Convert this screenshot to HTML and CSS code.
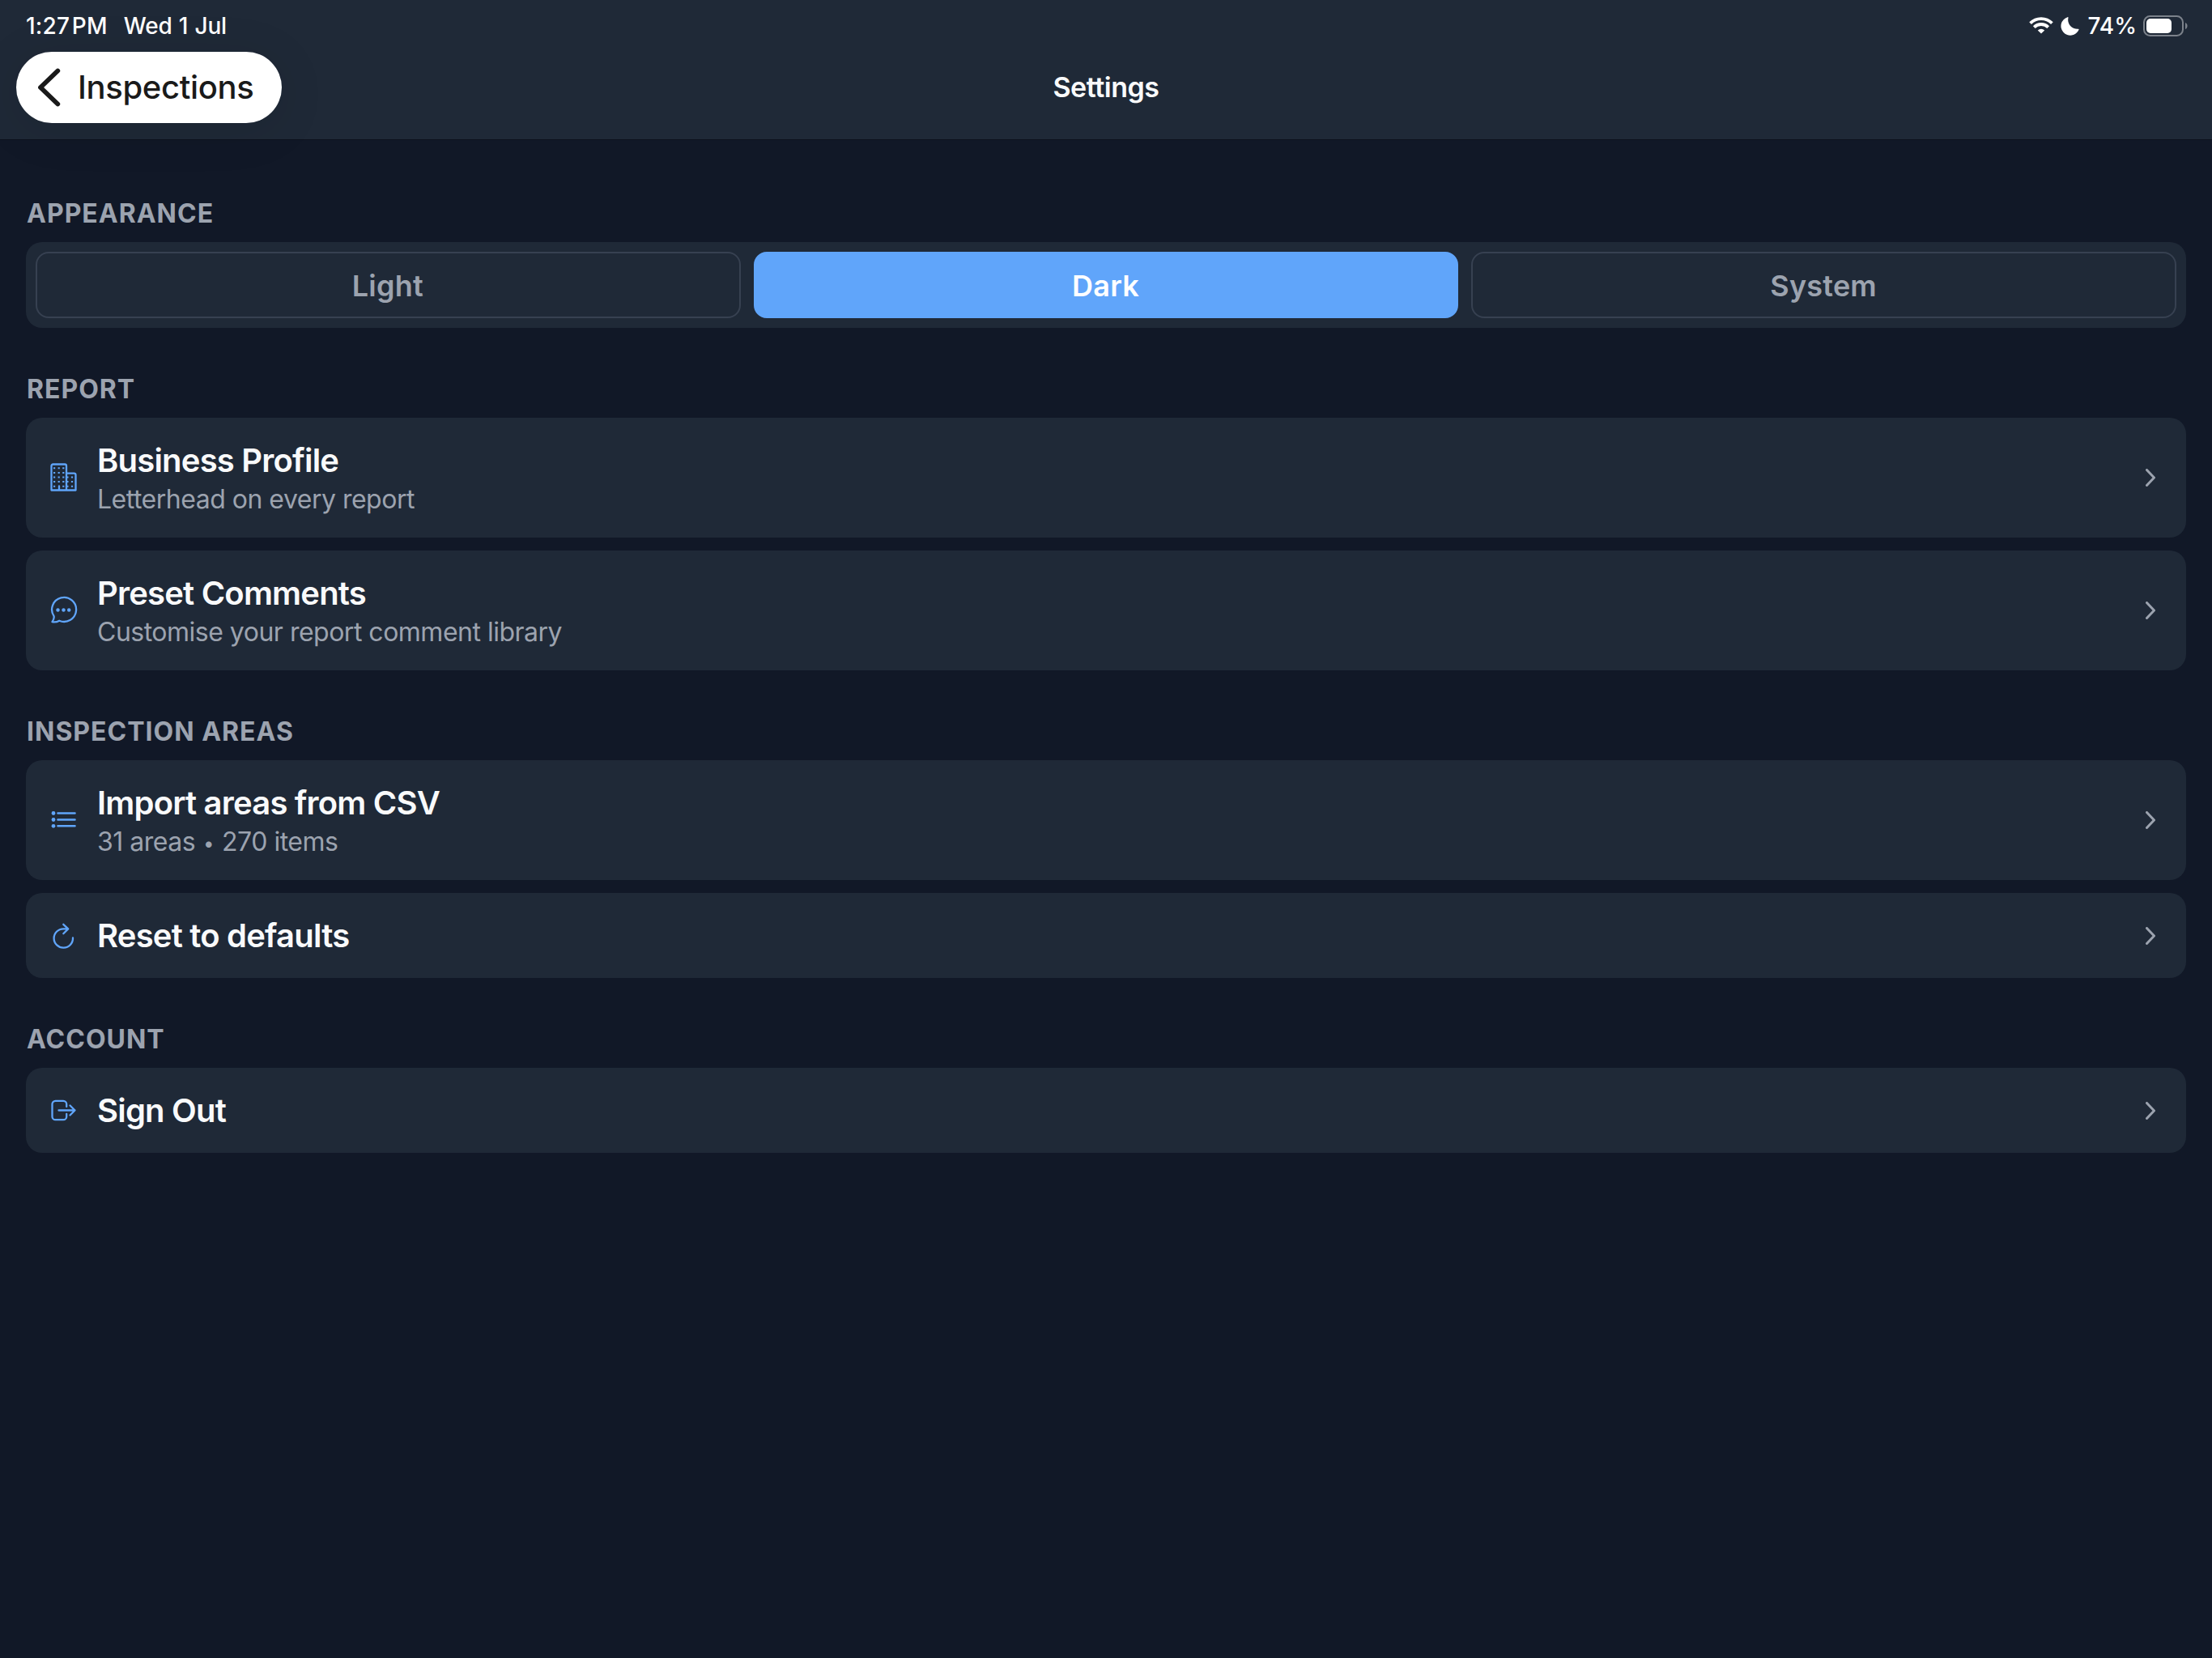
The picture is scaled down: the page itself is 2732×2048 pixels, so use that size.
FILE: index.html
```html
<!doctype html>
<html lang="en">
<head>
	<meta charset="UTF-8">
	<title>Settings</title>
	<link rel="stylesheet" href="styles.css">
</head>
<body>
	<header class="header">
		<div class="status">
			<div class="status-left"><span class="time">1:27&#8202;PM</span><span class="date">Wed 1 Jul</span></div>
			<div class="status-right">
				<svg class="wifi" width="30" height="22" viewBox="0 0 30 22" fill="none" stroke="#fff" stroke-width="3.8">
					<path d="M1.6 7.6a19 19 0 0 1 26.8 0"/>
					<path d="M6.3 12.6a12.3 12.3 0 0 1 17.4 0"/>
					<path d="M15 20.6l-4.2-4.2a6 6 0 0 1 8.4 0z" fill="#fff" stroke="none"/>
				</svg>
				<svg class="moon" width="24" height="24" viewBox="0 0 24 24" fill="#fff">
					<path d="M8.6 1.2c.6-.3 1.1.2.9.8A11.3 11.3 0 0 0 21.7 15.8c.7-.1 1.1.4.8 1A11.5 11.5 0 1 1 8.6 1.2z"/>
				</svg>
				<span class="percent">74%</span>
				<svg class="battery" width="56" height="26" viewBox="0 0 56 26">
					<rect x="1" y="1" width="48" height="24" rx="7.5" fill="none" stroke="#7c828b" stroke-width="2"/>
					<rect x="4" y="4" width="31" height="18" rx="5" fill="#fff"/>
					<path d="M52 9c3.4 1.2 3.4 7 0 8z" fill="#7c828b"/>
				</svg>
			</div>
		</div>
		<div class="navbar">
			<div class="back">
				<svg width="28" height="48" viewBox="0 0 28 48" fill="none" stroke="#1a1a1a" stroke-width="5.8" stroke-linecap="round" stroke-linejoin="round"><path d="M24.3 3.5L3 24l21.3 20.5"/></svg>
				<span class="back-text">Inspections</span>
			</div>
			<div class="title">Settings</div>
		</div>
	</header>
	<main class="content">
		<section class="section">
			<h2 class="label">APPEARANCE</h2>
			<div class="segments">
				<div class="segment">Light</div>
				<div class="segment active">Dark</div>
				<div class="segment">System</div>
			</div>
		</section>
		<section class="section">
			<h2 class="label">REPORT</h2>
			<div class="row tall">
				<svg class="icon" viewBox="0 0 36 36">
					<path d="M1.5 33.5V3.5a2 2 0 0 1 2-2h14.5a2 2 0 0 1 2 2v30zM20.5 12.7h9a2 2 0 0 1 2 2v18.8h-11M11 33.5v-5"/>
					<path class="dots" d="M4 6.3h14M4 11.9h14M4 17.5h14M4 23.1h14M4 28.7h3M15.2 28.7h3M20.3 17.5h9M20.3 23.1h9M20.3 28.7h9"/>
				</svg>
				<div class="text">
					<div class="name">Business Profile</div>
					<div class="detail">Letterhead on every report</div>
				</div>
				<svg class="chevron" viewBox="0 0 12 22"><path d="M1.5 1.5L10.5 11l-9 9.5"/></svg>
			</div>
			<div class="row tall">
				<svg class="icon" viewBox="0 0 36 36">
					<path d="M4.6 25.2A15 15 0 1 1 11.2 30.7C9 32 5 32.6 2.5 32.2C4 30 5 27.6 4.6 25.2z"/>
					<g class="filled"><circle cx="9.5" cy="17.5" r="2.2"/><circle cx="16.5" cy="17.5" r="2.2"/><circle cx="23.2" cy="17.5" r="2.2"/></g>
				</svg>
				<div class="text">
					<div class="name">Preset Comments</div>
					<div class="detail">Customise your report comment library</div>
				</div>
				<svg class="chevron" viewBox="0 0 12 22"><path d="M1.5 1.5L10.5 11l-9 9.5"/></svg>
			</div>
		</section>
		<section class="section">
			<h2 class="label">INSPECTION AREAS</h2>
			<div class="row tall">
				<svg class="icon" viewBox="0 0 36 36">
					<path class="thick" d="M9.5 9.5h21M9.5 17.5h21M9.5 25.3h21"/>
					<g class="filled"><circle cx="4" cy="9.5" r="2.4"/><circle cx="4" cy="17.5" r="2.4"/><circle cx="4" cy="25.3" r="2.4"/></g>
				</svg>
				<div class="text">
					<div class="name">Import areas from CSV</div>
					<div class="detail">31 areas <span class="bullet">•</span> 270 items</div>
				</div>
				<svg class="chevron" viewBox="0 0 12 22"><path d="M1.5 1.5L10.5 11l-9 9.5"/></svg>
			</div>
			<div class="row">
				<svg class="icon" viewBox="0 0 36 36">
					<path d="M28 20.5A11.7 11.7 0 1 1 16.3 9.3H22M16.3 3.8l5.9 5.6l-5.9 5.9"/>
				</svg>
				<div class="text">
					<div class="name">Reset to defaults</div>
				</div>
				<svg class="chevron" viewBox="0 0 12 22"><path d="M1.5 1.5L10.5 11l-9 9.5"/></svg>
			</div>
		</section>
		<section class="section">
			<h2 class="label">ACCOUNT</h2>
			<div class="row">
				<svg class="icon" viewBox="0 0 36 36">
					<path d="M20.2 13V9.8a4 4 0 0 0-4-4H6.5a4 4 0 0 0-4 4v15.4a4 4 0 0 0 4 4h9.7a4 4 0 0 0 4-4V22M10.5 17.5h20M24.5 11.5l6 6l-6 6"/>
				</svg>
				<div class="text">
					<div class="name">Sign Out</div>
				</div>
				<svg class="chevron" viewBox="0 0 12 22"><path d="M1.5 1.5L10.5 11l-9 9.5"/></svg>
			</div>
		</section>
	</main>
</body>
</html>
```
FILE: styles.css
```css
body {
	margin: 0;
	min-height: 2048px;
	background: #111827;
	color: #f9fafb;
	font-family: Inter, "Liberation Sans", sans-serif;
}
.header {
	box-sizing: border-box;
	height: 173px;
	background: #1f2937;
	border-bottom: 1px solid #0d121d;
}
.status {
	display: flex;
	justify-content: space-between;
	align-items: center;
	height: 64px;
	padding: 0 29px 0 32px;
	font-size: 28px;
	font-weight: 500;
	color: #fff;
}
.status-left,
.status-right {
	display: flex;
	align-items: center;
}
.time {
	letter-spacing: 0.2px;
}
.date {
	margin-left: 20px;
	letter-spacing: -0.2px;
	word-spacing: 1px;
}
.moon {
	margin: 0 9px 0 9px;
}
.battery {
	margin-left: 8px;
}
.navbar {
	display: grid;
	grid-template-columns: 1fr auto 1fr;
	align-items: center;
	height: 88px;
	padding: 0 20px;
}
.back {
	display: flex;
	align-items: center;
	justify-self: start;
	box-sizing: border-box;
	width: 328px;
	height: 88px;
	padding-left: 27px;
	border-radius: 44px;
	background: #fff;
	color: #1a1a1a;
	box-shadow: 0 8px 60px rgba(0, 0, 0, 0.1);
}
.back-text {
	margin: 0 0 2px 21px;
	font-size: 40px;
	font-weight: 500;
	letter-spacing: -0.35px;
}
.title {
	margin-bottom: 1px;
	font-size: 34px;
	font-weight: 600;
	letter-spacing: -0.45px;
}
.content {
	padding: 71px 32px 0;
}
.section {
	margin-bottom: 56px;
}
.label {
	margin: 0 0 16px;
	padding-left: 1px;
	font-size: 32px;
	line-height: 39px;
	font-weight: 700;
	letter-spacing: 1px;
	color: #9ca3af;
}
.segments {
	display: flex;
	gap: 16px;
	padding: 12px;
	border-radius: 20px;
	background: #1f2937;
}
.segment {
	flex: 1;
	box-sizing: border-box;
	height: 82px;
	padding-right: 1px;
	border: 2px solid #374151;
	border-radius: 16px;
	font-size: 36px;
	line-height: 80px;
	font-weight: 600;
	letter-spacing: 0.2px;
	text-align: center;
	color: #9ca3af;
}
.active {
	border-color: #60a5fa;
	background: #60a5fa;
	color: #fff;
}
.row {
	display: flex;
	align-items: center;
	box-sizing: border-box;
	height: 105px;
	padding: 0 38px 0 30px;
	border-radius: 20px;
	background: #1f2937;
}
.tall {
	height: 148px;
}
.row + .row {
	margin-top: 16px;
}
.icon {
	width: 36px;
	height: 36px;
	fill: none;
	stroke: #60a5fa;
	stroke-width: 2.3;
	stroke-linecap: round;
	stroke-linejoin: round;
}
.icon .dots {
	stroke-width: 2;
	stroke-dasharray: 2.2 3.4;
	stroke-linecap: butt;
}
.icon .thick {
	stroke-width: 2.6;
}
.icon .filled {
	fill: #60a5fa;
	stroke: none;
}
.text {
	flex: 1;
	margin-left: 22px;
}
.name {
	font-size: 40px;
	line-height: 48px;
	font-weight: 600;
	letter-spacing: -0.8px;
}
.detail {
	font-size: 32px;
	line-height: 39px;
	margin-top: 4px;
	letter-spacing: -0.5px;
	color: #9ca3af;
}
.bullet {
	margin: 0 1.5px;
	font-size: 24px;
	line-height: 1;
	vertical-align: 1px;
}
.chevron {
	width: 12px;
	height: 22px;
	fill: none;
	stroke: #9ca3af;
	stroke-width: 3;
	stroke-linecap: round;
	stroke-linejoin: round;
}
```
